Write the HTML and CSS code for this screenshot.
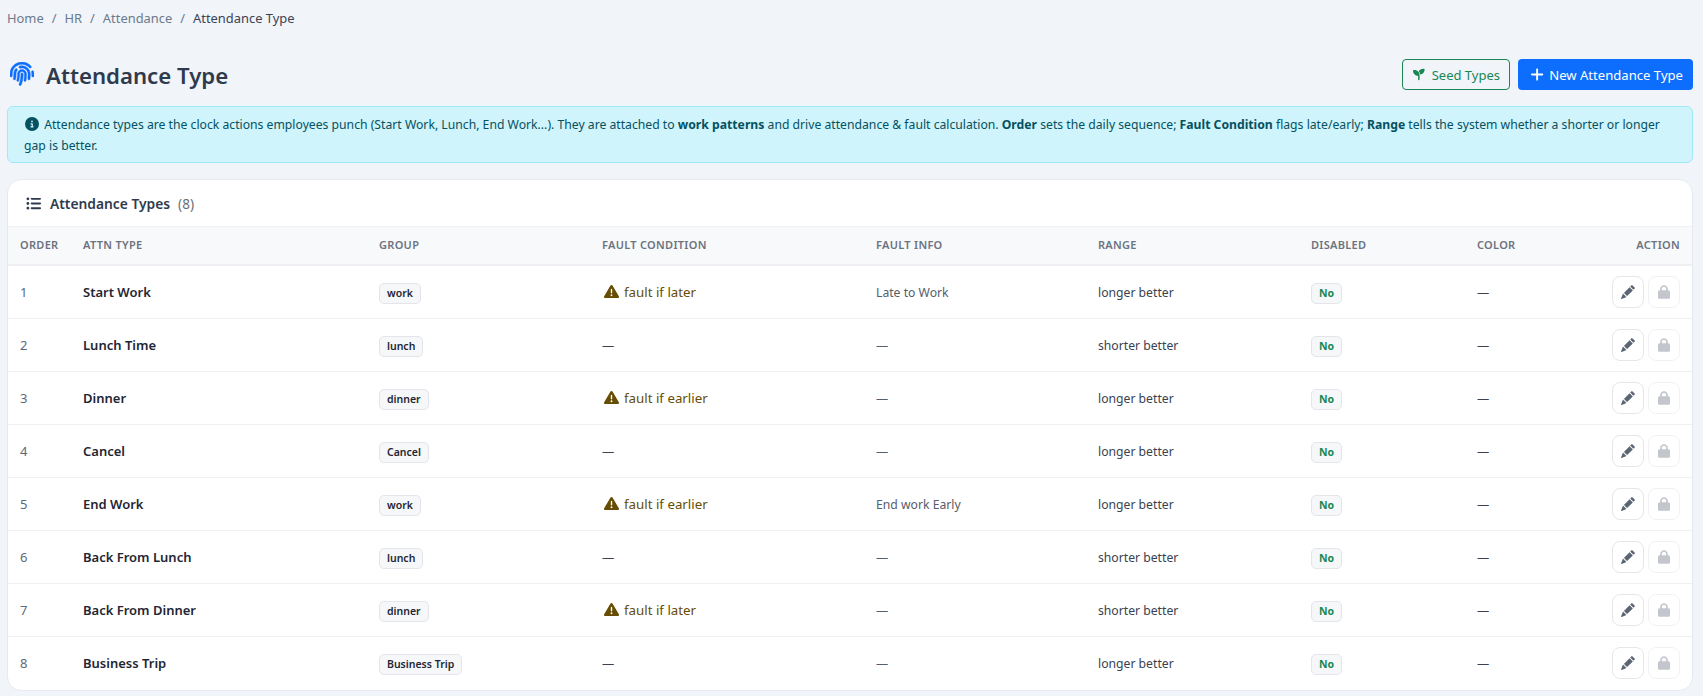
FILE: index.html
```html
<!DOCTYPE html>
<html lang="en">
<head>
    <meta charset="UTF-8">
    <title>Attendance Type</title>
    <link rel="stylesheet" href="styles.css">
</head>
<body>
    <svg class="sprite" aria-hidden="true">
        <symbol id="i-pencil" viewBox="0 0 16 16"><path d="M12.854.146a.5.5 0 0 0-.707 0L10.5 1.793 14.207 5.5l1.647-1.646a.5.5 0 0 0 0-.708l-3-3zm.646 6.061L9.793 2.5 3.293 9H3.5a.5.5 0 0 1 .5.5v.5h.5a.5.5 0 0 1 .5.5v.5h.5a.5.5 0 0 1 .5.5v.5h.5a.5.5 0 0 1 .5.5v.207l6.5-6.5zm-7.468 7.468A.5.5 0 0 1 6 13.5V13h-.5a.5.5 0 0 1-.5-.5V12h-.5a.5.5 0 0 1-.5-.5V11h-.5a.5.5 0 0 1-.5-.5V10h-.5a.499.499 0 0 1-.175-.032l-.179.178a.5.5 0 0 0-.11.168l-2 5a.5.5 0 0 0 .65.65l5-2a.5.5 0 0 0 .168-.11l.178-.178z"/></symbol>
        <symbol id="i-lock" viewBox="0 0 448 512"><path d="M144 144v48H304V144c0-44.2-35.8-80-80-80s-80 35.8-80 80zM80 192V144C80 64.5 144.5 0 224 0s144 64.5 144 144v48h16c35.3 0 64 28.7 64 64V448c0 35.3-28.7 64-64 64H64c-35.3 0-64-28.7-64-64V256c0-35.3 28.7-64 64-64H80z"/></symbol>
        <symbol id="i-warn" viewBox="0 0 512 512"><path d="M256 32c14.2 0 27.3 7.5 34.5 19.8l216 368c7.3 12.4 7.3 27.7 .2 40.1S486.3 480 472 480H40c-14.3 0-27.6-7.7-34.7-20.1s-7-27.8 .2-40.1l216-368C228.7 39.5 241.8 32 256 32zm0 128c-13.3 0-24 10.7-24 24V296c0 13.3 10.7 24 24 24s24-10.7 24-24V184c0-13.3-10.7-24-24-24zm32 224a32 32 0 1 0 -64 0 32 32 0 1 0 64 0z"/></symbol>
    </svg>

    <nav class="crumbs">
        <a>Home</a><span class="sep">/</span><a>HR</a><span class="sep">/</span><a>Attendance</a><span class="sep">/</span><span class="current">Attendance Type</span>
    </nav>

    <header class="page-head">
        <h1 class="page-title">
            <svg class="title-icon" viewBox="0 0 512 512"><path d="M48 256C48 141.1 141.1 48 256 48c63.1 0 119.6 28.1 157.8 72.5c8.6 10.1 23.8 11.2 33.8 2.6s11.2-23.8 2.6-33.8C403.3 34.6 333.7 0 256 0C114.6 0 0 114.6 0 256v40c0 13.3 10.7 24 24 24s24-10.7 24-24V256zm458.5-52.9c-2.7-13-15.5-21.3-28.4-18.5s-21.3 15.5-18.5 28.4c2.9 13.9 4.5 28.3 4.5 43.1v40c0 13.3 10.7 24 24 24s24-10.7 24-24V256c0-18.1-1.9-35.8-5.5-52.9zM256 80c-19 0-37.4 3-54.5 8.6c-15.2 5-18.7 23.7-8.3 35.9c7.1 8.3 18.8 10.8 29.4 7.9c10.6-2.9 21.8-4.4 33.4-4.4c70.7 0 128 57.3 128 128v24.9c0 25.2-1.5 50.3-4.4 75.3c-1.7 14.6 9.4 27.8 24.2 27.8c11.8 0 21.9-8.6 23.3-20.3c3.3-27.4 5-55 5-82.7V256c0-97.2-78.8-176-176-176zM150.7 148.7c-9.1-10.6-25.3-11.4-33.9-.4C93.7 178 80 215.4 80 256v24.9c0 24.2-2.6 48.4-7.8 71.9C68.8 368.4 80.1 384 96.1 384c10.5 0 19.9-7 22.2-17.3c6.4-28.1 9.7-56.8 9.7-85.8V256c0-27.2 8.5-52.4 22.9-73.1c7.2-10.4 8-24.6-.2-34.2zM256 160c-53 0-96 43-96 96v24.9c0 35.9-4.6 71.5-13.8 106.1c-3.8 14.3 6.7 29 21.5 29c9.5 0 17.9-6.2 20.4-15.4c10.5-39 15.9-79.2 15.9-119.7V256c0-28.7 23.3-52 52-52s52 23.3 52 52v24.9c0 36.3-3.5 72.4-10.4 107.9c-2.7 13.9 7.7 27.2 21.8 27.2c10.2 0 19-7 21-17c7.7-38.8 11.6-78.3 11.6-118.1V256c0-53-43-96-96-96zm24 96c0-13.3-10.7-24-24-24s-24 10.7-24 24v24.9c0 59.9-11 119.3-32.5 175.2l-5.9 15.3c-4.8 12.4 1.4 26.3 13.8 31s26.3-1.4 31-13.8l5.9-15.3C267.9 411.9 280 346.7 280 280.9V256z"/></svg>
            Attendance Type
        </h1>
        <div class="head-actions">
            <button class="btn btn-seed"><svg class="btn-icon" viewBox="0 0 512 512"><path d="M512 32c0 113.6-84.6 207.5-194.2 222c-7.1-53.4-30.6-101.6-65.3-139.3C290.8 46.3 364 0 448 0h32c17.7 0 32 14.3 32 32zM0 96C0 78.3 14.3 64 32 64H64c123.7 0 224 100.3 224 224v32V480c0 17.7-14.3 32-32 32s-32-14.3-32-32V320C100.3 320 0 219.7 0 96z"/></svg>Seed Types</button>
            <button class="btn btn-new"><svg class="btn-icon" viewBox="0 0 448 512"><path d="M256 80c0-17.7-14.3-32-32-32s-32 14.3-32 32V224H48c-17.7 0-32 14.3-32 32s14.3 32 32 32H192V432c0 17.7 14.3 32 32 32s32-14.3 32-32V288H400c17.7 0 32-14.3 32-32s-14.3-32-32-32H256V80z"/></svg>New Attendance Type</button>
        </div>
    </header>

    <div class="notice">
        <svg class="notice-icon" viewBox="0 0 512 512"><path d="M256 512A256 256 0 1 0 256 0a256 256 0 1 0 0 512zM216 336h24V272H216c-13.3 0-24-10.7-24-24s10.7-24 24-24h48c13.3 0 24 10.7 24 24v88h8c13.3 0 24 10.7 24 24s-10.7 24-24 24H216c-13.3 0-24-10.7-24-24s10.7-24 24-24zm40-208a32 32 0 1 1 0 64 32 32 0 1 1 0-64z"/></svg>
        Attendance types are the clock actions employees punch (Start Work, Lunch, End Work...). They are attached to <b>work patterns</b> and drive attendance &amp; fault calculation. <b>Order</b> sets the daily sequence; <b>Fault Condition</b> flags late/early; <b>Range</b> tells the system whether a shorter or longer gap is better.
    </div>

    <section class="card">
        <div class="card-head">
            <svg class="list-icon" viewBox="0 0 512 512"><path d="M64 144a48 48 0 1 0 0-96 48 48 0 1 0 0 96zM192 64c-17.7 0-32 14.3-32 32s14.3 32 32 32H480c17.7 0 32-14.3 32-32s-14.3-32-32-32H192zm0 160c-17.7 0-32 14.3-32 32s14.3 32 32 32H480c17.7 0 32-14.3 32-32s-14.3-32-32-32H192zm0 160c-17.7 0-32 14.3-32 32s14.3 32 32 32H480c17.7 0 32-14.3 32-32s-14.3-32-32-32H192zM64 464a48 48 0 1 0 0-96 48 48 0 1 0 0 96zm48-208a48 48 0 1 0 -96 0 48 48 0 1 0 96 0z"/></svg>
            <span class="card-title">Attendance Types</span>
            <span class="card-count">(8)</span>
        </div>
        <table class="types">
            <colgroup>
                <col class="c-order"><col class="c-type"><col class="c-group"><col class="c-cond"><col class="c-info"><col class="c-range"><col class="c-dis"><col class="c-color"><col class="c-action">
            </colgroup>
            <thead>
                <tr>
                    <th>Order</th><th>Attn Type</th><th>Group</th><th>Fault Condition</th><th>Fault Info</th><th>Range</th><th>Disabled</th><th>Color</th><th class="right">Action</th>
                </tr>
            </thead>
            <tbody>
                <tr>
                    <td class="num">1</td><td class="name">Start Work</td><td class="tagged"><span class="tag">work</span></td>
                    <td class="fault"><svg class="warn"><use href="#i-warn"/></svg>fault if later</td>
                    <td class="info">Late to Work</td><td>longer better</td><td class="tagged"><span class="tag tag-no">No</span></td><td>—</td>
                    <td class="actions"><button class="act"><svg class="ic-pen"><use href="#i-pencil"/></svg></button><button class="act off"><svg class="ic-lock"><use href="#i-lock"/></svg></button></td>
                </tr>
                <tr>
                    <td class="num">2</td><td class="name">Lunch Time</td><td class="tagged"><span class="tag">lunch</span></td>
                    <td>—</td>
                    <td class="info">—</td><td>shorter better</td><td class="tagged"><span class="tag tag-no">No</span></td><td>—</td>
                    <td class="actions"><button class="act"><svg class="ic-pen"><use href="#i-pencil"/></svg></button><button class="act off"><svg class="ic-lock"><use href="#i-lock"/></svg></button></td>
                </tr>
                <tr>
                    <td class="num">3</td><td class="name">Dinner</td><td class="tagged"><span class="tag">dinner</span></td>
                    <td class="fault"><svg class="warn"><use href="#i-warn"/></svg>fault if earlier</td>
                    <td class="info">—</td><td>longer better</td><td class="tagged"><span class="tag tag-no">No</span></td><td>—</td>
                    <td class="actions"><button class="act"><svg class="ic-pen"><use href="#i-pencil"/></svg></button><button class="act off"><svg class="ic-lock"><use href="#i-lock"/></svg></button></td>
                </tr>
                <tr>
                    <td class="num">4</td><td class="name">Cancel</td><td class="tagged"><span class="tag">Cancel</span></td>
                    <td>—</td>
                    <td class="info">—</td><td>longer better</td><td class="tagged"><span class="tag tag-no">No</span></td><td>—</td>
                    <td class="actions"><button class="act"><svg class="ic-pen"><use href="#i-pencil"/></svg></button><button class="act off"><svg class="ic-lock"><use href="#i-lock"/></svg></button></td>
                </tr>
                <tr>
                    <td class="num">5</td><td class="name">End Work</td><td class="tagged"><span class="tag">work</span></td>
                    <td class="fault"><svg class="warn"><use href="#i-warn"/></svg>fault if earlier</td>
                    <td class="info">End work Early</td><td>longer better</td><td class="tagged"><span class="tag tag-no">No</span></td><td>—</td>
                    <td class="actions"><button class="act"><svg class="ic-pen"><use href="#i-pencil"/></svg></button><button class="act off"><svg class="ic-lock"><use href="#i-lock"/></svg></button></td>
                </tr>
                <tr>
                    <td class="num">6</td><td class="name">Back From Lunch</td><td class="tagged"><span class="tag">lunch</span></td>
                    <td>—</td>
                    <td class="info">—</td><td>shorter better</td><td class="tagged"><span class="tag tag-no">No</span></td><td>—</td>
                    <td class="actions"><button class="act"><svg class="ic-pen"><use href="#i-pencil"/></svg></button><button class="act off"><svg class="ic-lock"><use href="#i-lock"/></svg></button></td>
                </tr>
                <tr>
                    <td class="num">7</td><td class="name">Back From Dinner</td><td class="tagged"><span class="tag">dinner</span></td>
                    <td class="fault"><svg class="warn"><use href="#i-warn"/></svg>fault if later</td>
                    <td class="info">—</td><td>shorter better</td><td class="tagged"><span class="tag tag-no">No</span></td><td>—</td>
                    <td class="actions"><button class="act"><svg class="ic-pen"><use href="#i-pencil"/></svg></button><button class="act off"><svg class="ic-lock"><use href="#i-lock"/></svg></button></td>
                </tr>
                <tr>
                    <td class="num">8</td><td class="name">Business Trip</td><td class="tagged"><span class="tag">Business Trip</span></td>
                    <td>—</td>
                    <td class="info">—</td><td>longer better</td><td class="tagged"><span class="tag tag-no">No</span></td><td>—</td>
                    <td class="actions"><button class="act"><svg class="ic-pen"><use href="#i-pencil"/></svg></button><button class="act off"><svg class="ic-lock"><use href="#i-lock"/></svg></button></td>
                </tr>
            </tbody>
        </table>
    </section>
</body>
</html>
```

FILE: styles.css
```css
* {
    box-sizing: border-box;
    margin: 0;
    padding: 0;
}
body {
    padding: 0 10px 0 7px;
    background-color: #f1f4f9;
    color: #2f3a4c;
    font-family: "Noto Sans", Arial, sans-serif;
    font-size: 12.5px;
    overflow: hidden;
}
.sprite {
    display: none;
}

/* breadcrumb */
.crumbs {
    display: flex;
    align-items: center;
    height: 36px;
    font-size: 12.9px;
    color: #6c7a8c;
}
.crumbs .sep {
    margin: 0 8px;
}
.crumbs .current {
    color: #3a4352;
}

/* page title */
.page-head {
    display: flex;
    justify-content: space-between;
    align-items: center;
    margin-top: 23px;
    height: 31px;
}
.page-title {
    display: flex;
    align-items: center;
    gap: 12px;
    padding-left: 3px;
    padding-top: 1px;
    font-size: 22.2px;
    font-weight: 600;
    color: #2f3a4c;
}
.title-icon {
    width: 24px;
    height: 24px;
    margin-top: -2px;
    fill: #0d6efd;
    stroke: #0d6efd;
    stroke-width: 10;
}
.head-actions {
    display: flex;
    gap: 8px;
}
.btn {
    display: flex;
    align-items: center;
    height: 31px;
    padding: 0 9px;
    border-radius: 4px;
    border: 1px solid transparent;
    font-family: inherit;
    font-size: 13px;
    white-space: nowrap;
}
.btn-icon {
    width: 15px;
    height: 15px;
    margin-right: 6px;
    fill: currentColor;
}
.btn-seed {
    width: 108px;
    padding-left: 10px;
    color: #198754;
    border-color: #198754;
    background-color: transparent;
}
.btn-seed .btn-icon {
    margin-right: 7px;
}
.btn-new {
    width: 175px;
    padding-left: 11px;
    font-size: 13.1px;
    color: #fff;
    background-color: #0d6efd;
}
.btn-new .btn-icon {
    margin-right: 5px;
}

/* info box */
.notice {
    margin-top: 16px;
    padding: 8px 16px;
    height: 57px;
    line-height: 20.5px;
    border: 1px solid #9eeaf9;
    border-radius: 6px;
    background-color: #cff4fc;
    color: #055160;
    font-size: 12.2px;
}
.notice-icon {
    width: 14px;
    height: 14px;
    margin: 0 2px 0 1px;
    vertical-align: -2px;
    fill: #055160;
}
.notice b {
    font-weight: 700;
}

/* card + table */
.card {
    margin-top: 16px;
    height: 512px;
    background-color: #fff;
    border: 1px solid #e6e9ee;
    border-radius: 14px;
    overflow: hidden;
}
.card-head {
    display: flex;
    align-items: center;
    height: 47px;
    padding-left: 18px;
    border-bottom: 1px solid #eef0f4;
}
.list-icon {
    width: 15px;
    height: 15px;
    margin-right: 9px;
    fill: #2f3a4c;
}
.card-title {
    font-size: 13.8px;
    font-weight: 600;
}
.card-count {
    margin-left: 8px;
    font-size: 13.6px;
    color: #6b6f76;
}
.types {
    width: 100%;
    table-layout: fixed;
    border-collapse: collapse;
}
.c-order { width: 63px; }
.c-type { width: 296px; }
.c-group { width: 223px; }
.c-cond { width: 274px; }
.c-info { width: 222px; }
.c-range { width: 213px; }
.c-dis { width: 166px; }
.c-color { width: 132px; }
.types th {
    height: 38px;
    padding: 0 12px 2px;
    text-align: left;
    text-transform: uppercase;
    font-size: 11px;
    font-weight: 600;
    letter-spacing: 0.3px;
    color: #6c7380;
    background-color: #f8f9fb;
    border-bottom: 2px solid #eef0f4;
}
.types th.right {
    text-align: right;
}
.types td {
    height: 53px;
    padding: 1px 12px 0;
    border-bottom: 1px solid #f0f1f4;
    color: #3a4250;
    font-size: 12.2px;
}
.types tbody tr:last-child td {
    border-bottom: 0;
}
.types td.num {
    color: #5e6878;
    font-size: 13px;
}
.types td.name {
    font-weight: 600;
    color: #1f2633;
    font-size: 13px;
}
.types td.info {
    color: #555e6c;
}
.types td.fault {
    color: #664d03;
    font-size: 13.3px;
}
.types td.tagged {
    padding-top: 0;
}
.warn {
    width: 15px;
    height: 15px;
    margin: 0 5px 0 2px;
    vertical-align: -2px;
    fill: #664d03;
}
.tag {
    display: inline-block;
    padding: 2px 7px;
    margin-top: 4px;
    font-size: 10.5px;
    font-weight: 600;
    line-height: 15px;
    color: #1f2633;
    background-color: #f6f7f9;
    border: 1px solid #e3e5ea;
    border-radius: 5px;
}
.tag-no {
    color: #198754;
    font-weight: 700;
}
.types td.actions {
    padding: 0 12px 0 0;
    text-align: right;
    white-space: nowrap;
}
.act {
    display: inline-flex;
    justify-content: center;
    align-items: center;
    width: 32px;
    height: 32px;
    margin-left: 4px;
    vertical-align: middle;
    background-color: #fff;
    border: 1px solid #e4e6ea;
    border-radius: 8px;
}
.act.off {
    border-color: #f1f2f4;
}
.ic-pen {
    width: 14px;
    height: 14px;
    fill: #5b6472;
}
.ic-lock {
    width: 12px;
    height: 14px;
    fill: #c3c6cc;
}
```
